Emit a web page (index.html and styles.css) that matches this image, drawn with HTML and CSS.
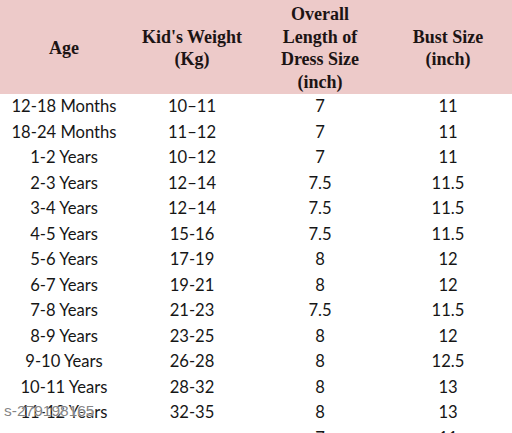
FILE: index.html
```html
<!DOCTYPE html>
<html lang="en">
<head>
  <meta charset="UTF-8">
  <meta name="viewport" content="width=device-width, initial-scale=1.0">
  <title>Size Chart</title>
  <link rel="stylesheet" href="styles.css">
</head>
<body>
  <div class="chart">
    <table class="size-table">
      <thead>
        <tr>
          <th>Age</th>
          <th>Kid's Weight<br>(Kg)</th>
          <th>Overall<br>Length of<br>Dress Size<br>(inch)</th>
          <th>Bust Size<br>(inch)</th>
        </tr>
      </thead>
      <tbody>
        <tr><td>12-18 Months</td><td>10–11</td><td>7</td><td>11</td></tr>
        <tr><td>18-24 Months</td><td>11–12</td><td>7</td><td>11</td></tr>
        <tr><td>1-2 Years</td><td>10–12</td><td>7</td><td>11</td></tr>
        <tr><td>2-3 Years</td><td>12–14</td><td>7.5</td><td>11.5</td></tr>
        <tr><td>3-4 Years</td><td>12–14</td><td>7.5</td><td>11.5</td></tr>
        <tr><td>4-5 Years</td><td>15-16</td><td>7.5</td><td>11.5</td></tr>
        <tr><td>5-6 Years</td><td>17-19</td><td>8</td><td>12</td></tr>
        <tr><td>6-7 Years</td><td>19-21</td><td>8</td><td>12</td></tr>
        <tr><td>7-8 Years</td><td>21-23</td><td>7.5</td><td>11.5</td></tr>
        <tr><td>8-9 Years</td><td>23-25</td><td>8</td><td>12</td></tr>
        <tr><td>9-10 Years</td><td>26-28</td><td>8</td><td>12.5</td></tr>
        <tr><td>10-11 Years</td><td>28-32</td><td>8</td><td>13</td></tr>
        <tr><td>11-12 Years</td><td>32-35</td><td>8</td><td>13</td></tr>
        <tr><td></td><td></td><td>7</td><td>11</td></tr>
      </tbody>
    </table>
    <span class="watermark">s-279198165</span>
  </div>
</body>
</html>
```

FILE: styles.css
```css
html, body {
  margin: 0;
  padding: 0;
  background: #fff;
  overflow: hidden;
}
.chart {
  position: relative;
  width: 512px;
  height: 433px;
  overflow: hidden;
}
.size-table {
  width: 512px;
  border-collapse: collapse;
  table-layout: fixed;
}
.size-table th {
  height: 92px;
  padding: 2px 0 0;
  background: #edcac9;
  color: #1c1414;
  font-family: "Liberation Serif", serif;
  font-weight: bold;
  font-size: 18px;
  line-height: 22.5px;
  text-align: center;
  vertical-align: middle;
}
.size-table td {
  height: 25.5px;
  padding: 0;
  color: #161616;
  font-family: "Lato", "Open Sans", sans-serif;
  font-size: 16.6px;
  line-height: 25.5px;
  text-align: center;
  white-space: nowrap;
}
.watermark {
  position: absolute;
  left: 4px;
  top: 402px;
  color: rgba(100, 100, 100, 0.8);
  font-family: "Liberation Sans", sans-serif;
  font-size: 15.5px;
  text-shadow: 0 0 1px #fff, 0 0 2px #fff;
}
```
